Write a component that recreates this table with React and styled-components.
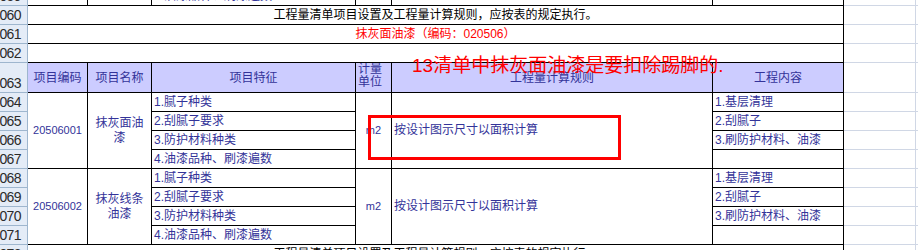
import React from "react";
import styled, { createGlobalStyle, css } from "styled-components";

const GlobalStyle = createGlobalStyle`
  html, body {
    margin: 0;
    padding: 0;
    background: #ffffff;
    overflow: hidden;
  }
  body {
    font-family: "Liberation Sans", "Noto Sans CJK SC", sans-serif;
    font-size: 12px;
  }
`;

const Page = styled.div`
  position: relative;
  width: 918px;
  height: 250px;
  overflow: hidden;
`;

const Sheet = styled.div`
  display: grid;
  grid-template-columns: 28px 60px 64px 204px 36px 321px 131px 72px 1fr;
  grid-template-rows: 19px 19px 19px 19px 30px repeat(10, 19px);
  margin-top: -13px;
`;

const place = css`
  grid-column: ${(p) => p.$col} / span ${(p) => p.$cspan || 1};
  grid-row: ${(p) => p.$row} / span ${(p) => p.$rspan || 1};
`;

const RowHead = styled.div`
  ${place};
  grid-column: 1;
  box-sizing: border-box;
  background: #e4ecf7;
  border-right: 1px solid #9eb6ce;
  border-bottom: 1px solid #9eb6ce;
  display: flex;
  align-items: flex-end;
  justify-content: flex-end;
  padding: 0 6px 1px 0;
  overflow: hidden;
  white-space: nowrap;
  font-size: 14px;
  letter-spacing: -0.6px;
  line-height: 15px;
  color: #2b2b2b;
`;

const Cell = styled.div`
  ${place};
  box-sizing: border-box;
  border-right: 1px solid #000;
  border-bottom: 1px solid #000;
  display: flex;
  align-items: ${(p) => (p.$top ? "flex-start" : "center")};
  justify-content: ${(p) => (p.$left ? "flex-start" : "center")};
  text-align: ${(p) => (p.$left ? "left" : "center")};
  padding: ${(p) => (p.$left || p.$head ? "0 2px" : "0 6px")};
  padding-top: ${(p) => (p.$head && !p.$top ? "2px" : "0")};
  color: ${(p) => p.$color || "#333399"};
  background: ${(p) => (p.$head ? "#ccccff" : "transparent")};
  line-height: 15px;
  white-space: ${(p) => (p.$left || p.$head ? "nowrap" : "normal")};
  overflow: hidden;
`;

const Code = styled.span`
  font-size: 11px;
`;

const Unit = styled.span`
  line-height: 13px;
`;

const Grid = styled.div`
  ${place};
  box-sizing: border-box;
  border-bottom: 1px solid #d0d7e5;
  border-right: ${(p) => (p.$last ? "none" : "1px solid #d0d7e5")};
`;

const Note = styled.div`
  position: absolute;
  left: 412px;
  top: 55px;
  font-family: "Liberation Sans", "Noto Sans CJK SC", sans-serif;
  font-size: 19px;
  line-height: 22px;
  color: #ff0000;
  white-space: nowrap;
`;

const Marker = styled.div`
  position: absolute;
  left: 368px;
  top: 115px;
  width: 253px;
  height: 45px;
  box-sizing: border-box;
  border: 3px solid #ff0000;
`;

const features = ["1.腻子种类", "2.刮腻子要求", "3.防护材料种类", "4.油漆品种、刷漆遍数"];
const works = ["1.基层清理", "2.刮腻子", "3.刷防护材料、油漆", ""];

const items = [
  { code: "20506001", name: "抹灰面油漆", start: 6 },
  { code: "20506002", name: "抹灰线条油漆", start: 10 },
];

const rowNumbers = [
  "1059", "1060", "1061", "1062", "1063", "1064", "1065", "1066",
  "1067", "1068", "1069", "1070", "1071", "1072", "1073",
];

function Item({ code, name, start }) {
  return (
    <>
      <Cell $col={2} $row={start} $rspan={4}>
        <Code>{code}</Code>
      </Cell>
      <Cell $col={3} $row={start} $rspan={4}>
        {name}
      </Cell>
      {features.map((f, i) => (
        <Cell key={f} $col={4} $row={start + i} $left>
          {f}
        </Cell>
      ))}
      <Cell $col={5} $row={start} $rspan={4}>
        <Code>m2</Code>
      </Cell>
      <Cell $col={6} $row={start} $rspan={4} $left>
        按设计图示尺寸以面积计算
      </Cell>
      {works.map((w, i) => (
        <Cell key={i} $col={7} $row={start + i} $left>
          {w}
        </Cell>
      ))}
    </>
  );
}

export default function App() {
  return (
    <Page>
      <GlobalStyle />
      <Sheet>
        {rowNumbers.map((n, i) => (
          <React.Fragment key={n}>
            <RowHead $row={i + 1}>{n}</RowHead>
            <Grid $col={8} $row={i + 1} />
            <Grid $col={9} $row={i + 1} $last />
          </React.Fragment>
        ))}

        <Cell $col={2} $row={1} />
        <Cell $col={3} $row={1} />
        <Cell $col={4} $row={1} $left>
          4.油漆品种、刷漆遍数
        </Cell>
        <Cell $col={5} $row={1} />
        <Cell $col={6} $row={1} />
        <Cell $col={7} $row={1} />

        <Cell $col={2} $row={2} $cspan={6} $color="#000">
          工程量清单项目设置及工程量计算规则，应按表的规定执行。
        </Cell>
        <Cell $col={2} $row={3} $cspan={6} $color="#ff0000">
          抹灰面油漆（编码：020506）
        </Cell>
        <Cell $col={2} $row={4} $cspan={6} />

        <Cell $col={2} $row={5} $head>项目编码</Cell>
        <Cell $col={3} $row={5} $head>项目名称</Cell>
        <Cell $col={4} $row={5} $head>项目特征</Cell>
        <Cell $col={5} $row={5} $head $left $top>
          <Unit>
            计量
            <br />
            单位
          </Unit>
        </Cell>
        <Cell $col={6} $row={5} $head>工程量计算规则</Cell>
        <Cell $col={7} $row={5} $head>工程内容</Cell>

        {items.map((it) => (
          <Item key={it.code} {...it} />
        ))}

        <Cell $col={2} $row={14} $cspan={6} $color="#000">
          工程量清单项目设置及工程量计算规则，应按表的规定执行。
        </Cell>
        <Cell $col={2} $row={15} $cspan={6} />
      </Sheet>

      <Note>13清单中抹灰面油漆是要扣除踢脚的.</Note>
      <Marker />
    </Page>
  );
}
